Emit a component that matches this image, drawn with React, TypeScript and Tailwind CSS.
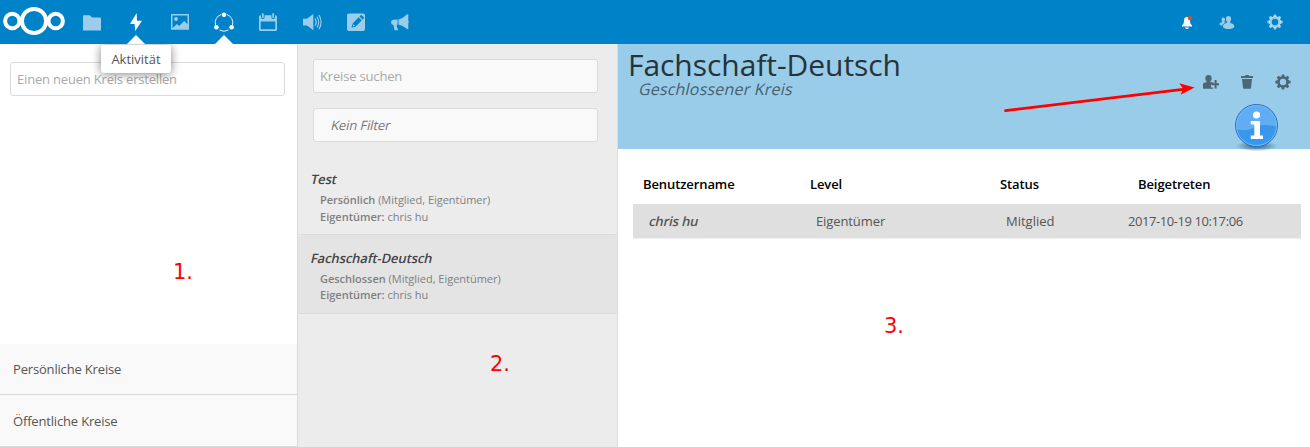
import type { ReactNode } from 'react';

function Icon({ children, className = '', size = 20 }: { children: ReactNode; className?: string; size?: number }) {
  return (
    <svg width={size} height={size} viewBox={`0 0 ${size} ${size}`} className={`block shrink-0 ${className}`} fill="currentColor">
      {children}
    </svg>
  );
}

function Logo() {
  return (
    <svg width="64" height="30" viewBox="0 0 64 30" className="ml-[2px] block shrink-0" fill="none" stroke="#fff" strokeWidth="4">
      <circle cx="32" cy="15" r="12.1" />
      <circle cx="10.3" cy="15" r="7.2" />
      <circle cx="53.7" cy="15" r="7.2" />
    </svg>
  );
}

function Gear({ className = '' }: { className?: string }) {
  const angles = [0, 45, 90, 135, 180, 225, 270, 315];
  return (
    <Icon size={16} className={className}>
      <circle cx="8" cy="8" r="4.5" fill="none" stroke="currentColor" strokeWidth="2.6" />
      {angles.map((a) => (
        <path key={a} d="M6.3 3 6.8.4h2.4L9.7 3z" transform={`rotate(${a} 8 8)`} />
      ))}
    </Icon>
  );
}

/* Slanted upright letters, in place of the family's cursive italic. */
function Oblique({ children, className = '' }: { children: ReactNode; className?: string }) {
  return <span className={`inline-block origin-[0_75%] -skew-x-[13deg] whitespace-nowrap ${className}`}>{children}</span>;
}

const apps: { name: string; active?: boolean; icon: ReactNode }[] = [
  { name: 'folder', icon: <path d="M1.6 3.2h6.2l2.2 2.3h8.4q.6 0 .6.6v11.8q0 .6-.6.6H1.6q-.6 0-.6-.6V3.8q0-.6.6-.6z" /> },
  { name: 'activity', active: true, icon: <path d="M10.700 1 4 12h4.600L9.200 19 16 8.800h-5z" /> },
  {
    name: 'gallery',
    icon: (
      <>
        <path fillRule="evenodd" d="M1.6 2h16.8q.6 0 .6.6v14.6q0 .6-.6.6H1.6q-.6 0-.6-.6V2.6q0-.6.6-.6zm.9 1.5v12.8l4.3-4.2 2.3 2 5-5.2 3.4 3.4V3.5z" />
        <circle cx="6" cy="7" r="1.9" />
      </>
    ),
  },
  {
    name: 'circles',
    active: true,
    icon: (
      <>
        <path d="M12.900 2.500A8.600 8.600 0 0 1 18.500 13M14.500 18a9 9 0 0 1-9 0M1.500 13A8.600 8.600 0 0 1 7.100 2.500" fill="none" stroke="currentColor" strokeWidth=".9" />
        <circle cx="10" cy="2.7" r="2.3" />
        <circle cx="2.4" cy="15.2" r="2.3" />
        <circle cx="17.6" cy="15.2" r="2.3" />
      </>
    ),
  },
  {
    name: 'calendar',
    icon: (
      <>
        <path fillRule="evenodd" d="M2.5 3.2H3v2.1q0 1.8 1.8 1.8t1.8-1.8V3.2h6.8v2.1q0 1.8 1.8 1.8T17 5.300V3.200h.5q1.500 0 1.500 1.500v12.800q0 1.500-1.500 1.500h-15Q1 19 1 17.500V4.700q0-1.500 1.500-1.500zM2.700 9.500v7.800h14.600V9.500z" />
        <rect x="4" y="1" width="1.700" height="5" rx=".8" />
        <rect x="14.300" y="1" width="1.700" height="5" rx=".8" />
      </>
    ),
  },
  {
    name: 'audio',
    icon: (
      <>
        <path d="M1 6.800h4L11.300 2v16.300L5 13.500H1z" />
        <path d="M13 6.500q2.200 3.700 0 7.200M15 4.700q3.300 5.400 0 10.800M17 3q4.200 7.100 0 14.200" fill="none" stroke="currentColor" strokeWidth="1.200" />
      </>
    ),
  },
  {
    name: 'notes',
    icon: (
      <path
        fillRule="evenodd"
        d="M3 1.500h14q2 0 2 2V17q0 2-2 2H3q-2 0-2-2V3.500q0-2 2-2zM12.600 5.300 6.700 11.400 5.500 15.700l4.300-1.300 6-6.100zM13.500 4.400l3.200 3.100 1-1q.7-.7 0-1.400l-1.700-1.700q-.8-.7-1.500 0zM7.400 12.300l1.600 1.500-2.100.6z"
      />
    ),
  },
  {
    name: 'announcements',
    icon: (
      <>
        <path d="M17.200 2.300q.8-.3 1.100.5v6q1.400 1 0 2.200v5.700q-.4.800-1.100.4-4.800-3.700-8.700-4.600V7.600q4.400-1.100 8.700-5.300z" />
        <path d="M7.600 7.600v5l-1 .2.400 1.200-.3 1 1.500 2.400q-.3.900-1 .9H5q-.6 0-.7-.7L3.500 13q-2.500-.2-2.500-2.700 0-2.300 2.500-2.500z" />
      </>
    ),
  },
];

function Pointer() {
  return <div className="absolute bottom-0 left-[13px] h-0 w-0 border-x-[9px] border-b-[9px] border-x-transparent border-b-white" />;
}

function Header() {
  return (
    <header className="relative z-10 flex h-[44px] shrink-0 items-start bg-[#0082c9]">
      <div className="flex h-[42px] w-[70px] items-center"><Logo /></div>
      <nav className="flex">
        {apps.map((app) => (
          <div key={app.name} className={`relative flex h-11 w-11 items-center justify-center ${app.active ? 'text-white' : 'text-white/60'}`}>
            <Icon>{app.icon}</Icon>
            {app.active && <Pointer />}
            {app.name === 'activity' && (
              <div className="absolute left-[-13px] top-[44px] mt-px flex h-7 w-[70px] items-center justify-center rounded-[3px] bg-white pt-[2px] text-[13px] text-[#555] shadow-[0_1px_10px_rgba(50,50,50,0.6)] [clip-path:inset(-1px_-14px_-14px_-14px)]">
                Aktivität
              </div>
            )}
          </div>
        ))}
      </nav>
      <div className="ml-auto flex h-11 items-center pr-[27px]">
        <Icon size={16} className="mr-6 text-white">
          <path d="M8 3q-3 0-3 3.500c0 2.800-.8 4-2 4.700v1.300h10v-1.300c-1.200-.7-2-1.900-2-4.700Q11 3 8 3zM6 13.500h4q-.5 1.500-2 1.500t-2-1.500z" />
          <circle cx="10.900" cy="4.100" r="2.200" fill="#e9481f" />
        </Icon>
        <Icon size={16} className="mr-8 text-white/60">
          <path d="M9.500 2q2.600 0 2.600 2.900 0 1.500-.9 2.600v1.400q4 1.100 4 2.700V13q-1.400 2-5.700 2T4 13v-1.400q0-1.600 3.800-2.700V7.500q-.9-1.100-.9-2.600Q6.900 2 9.500 2z" />
          <path d="M4.300 3.500q1.800 0 1.800 2 0 1-.6 1.700v1q.5.200 1 .5-3.200 1.100-3.400 3.100Q1 11.300.5 10.600V9.700q.1-.8 2.600-1.500v-1q-.6-.7-.6-1.700 0-2 1.800-2z" />
        </Icon>
        <Gear className="text-white/60" />
      </div>
    </header>
  );
}

function CircleRow({ name, kind, selected }: { name: string; kind: string; selected?: boolean }) {
  return (
    <div className={`h-[79px] rounded-[3px] border-b border-[#dadada] pl-[12px] pt-[13px] ${selected ? 'bg-[#e4e4e4]' : ''}`}>
      <div className="text-[13px] font-semibold leading-[20px] text-[#444]"><Oblique className="tracking-[-0.1px]">{name}</Oblique></div>
      <div className="mt-[3px] pl-[10px] text-[11px] leading-[16px] text-[#808080]">
        <div className="tracking-[-0.02px]"><span className="font-semibold">{kind}</span> (Mitglied, Eigentümer)</div>
        <div className={selected ? '' : 'pt-px'}><span className="font-semibold">Eigentümer:</span> chris hu</div>
      </div>
    </div>
  );
}

function Marker({ children, className }: { children: ReactNode; className: string }) {
  return <div className={`absolute font-['DejaVu_Sans',sans-serif] text-[21px] leading-[24px] text-[#ff0000] ${className}`}>{children}</div>;
}

function InfoBadge() {
  return (
    <svg className="absolute left-[614px] top-[57px]" width="50" height="52" viewBox="0 0 50 52">
      <defs>
        <radialGradient id="shade"><stop offset=".3" stopColor="#2f5873" stopOpacity=".65" /><stop offset="1" stopColor="#2f5873" stopOpacity="0" /></radialGradient>
        <linearGradient id="wave" x1="0" y1="0" x2="0" y2="1"><stop stopColor="#3e93e8" /><stop offset="1" stopColor="#329bf5" /></linearGradient>
      </defs>
      <ellipse cx="24.500" cy="45" rx="21" ry="5.500" fill="url(#shade)" />
      <circle cx="24.500" cy="24.500" r="21" fill="#60adf3" stroke="#246eb9" />
      <path d="M4.500 28q9 3 18-1.500t22.200-.7A20.300 20.300 0 0 1 4.500 28z" fill="url(#wave)" />
      <circle cx="24.500" cy="24.500" r="20" fill="none" stroke="#80baf4" strokeWidth=".8" />
      <circle cx="24.500" cy="14" r="3.600" fill="#fff" />
      <path d="M18.800 20h9.200v14.500h3v3.500H18.800v-3.500h3.500v-11h-3.500z" fill="#fff" />
    </svg>
  );
}

export default function App() {
  return (
    <div className="flex h-[447px] w-[1310px] flex-col overflow-hidden bg-white font-['Open_Sans',sans-serif] text-[13px]">
      <Header />
      <div className="flex min-h-0 flex-1">
        <aside className="relative flex w-[298px] shrink-0 flex-col border-r border-[#dadada] bg-white">
          <div className="ml-[10px] mt-[18px] flex h-[34px] w-[275px] items-center rounded-[3px] border border-[#dadada] px-[6px] pt-px tracking-[-0.19px] text-[#aaa]">Einen neuen Kreis erstellen</div>
          <div className="mt-auto bg-[#f9f9f9] tracking-[-0.17px] text-[#555]">
            <div className="flex h-[51px] items-center border-b border-[#dadada] pl-[13px] pt-px">Persönliche Kreise</div>
            <div className="flex h-[52px] items-center border-b border-[#dadada] pl-[13px] pt-[2px]">Öffentliche Kreise</div>
          </div>
          <Marker className="left-[173px] top-[216px]">1.</Marker>
        </aside>

        <section className="relative w-[320px] shrink-0 border-r border-[#dadada] bg-[#ececec]">
          <div className="mx-[15px] mt-[15px] flex h-[34px] w-[285px] items-center rounded-[3px] border border-[#dadada] bg-[#f9f9f9] px-[6px] pt-px tracking-[-0.17px] text-[#aaa]">Kreise suchen</div>
          <div className="mx-[15px] mt-[15px] flex h-[34px] w-[285px] items-center rounded-[3px] border border-[#dadada] bg-[#f9f9f9] px-[16px] pt-px text-[#777]"><Oblique className="tracking-[-0.1px]">Kein Filter</Oblique></div>
          <div className="mt-[14px]">
            <CircleRow name="Test" kind="Persönlich" />
            <CircleRow name="Fachschaft-Deutsch" kind="Geschlossen" selected />
          </div>
          <Marker className="left-[192px] top-[308px]">2.</Marker>
        </section>

        <main className="relative min-w-0 flex-1">
          <div className="relative flex h-[105px] justify-between bg-[#99cce9]">
            <div className="pl-[10px] pt-[3px]">
              <h1 className="text-[30px] leading-[36px] tracking-[-0.05px] text-[#26333a]">Fachschaft-Deutsch</h1>
              <p className="-mt-[5px] pl-[10px] text-[16px] leading-[22px] text-[#47606e]"><Oblique className="tracking-[0.2px]">Geschlossener Kreis</Oblique></p>
            </div>
            <div className="flex h-4 gap-5 pr-[19px] pt-[30px] text-[#4d6675]">
              <Icon size={16}>
                <path d="M5.500 1q3.200 0 3.200 3.400 0 1.800-1.300 3v.8h3v2.600H8v2.700h2v1.300H0V10.200q0-2 3.600-2v-.8q-1.300-1.200-1.300-3Q2.300 1 5.500 1z" />
                <path d="M11.600 6h2v3.200H16v2h-2.400v3.300h-2v-3.300H9v-2h2.600z" />
              </Icon>
              <Icon size={16}><path d="M6.200 1h3.600v1H14v2H2V2h4.200zM3 5h10l-1 9q-.1.800-.8.800H4.800q-.7 0-.8-.8z" /></Icon>
              <Gear />
            </div>
            <svg className="absolute left-[382px] top-[36px]" width="198" height="36" viewBox="0 0 198 36">
              <path d="M5.500 30.700 185 9.200" stroke="#f00" strokeWidth="2.800" strokeLinecap="round" />
              <path d="m194.500 7.500-15.200-4.200 3.800 5.400-2.400 6z" fill="#f00" />
            </svg>
            <InfoBadge />
          </div>
          <div className="mx-[15px] mt-[15px] w-[668px]">
            <div className="flex h-10 items-center pt-[2px] font-semibold tracking-[-0.1px] text-black">
              <div className="w-[167px] pl-[10px]">Benutzername</div>
              <div className="w-[190px] pl-[10px]">Level</div>
              <div className="w-[138px] pl-[10px]">Status</div>
              <div className="pl-[10px]">Beigetreten</div>
            </div>
            <div className="flex h-[35px] items-center border-b border-[#eee] bg-[#dfdfdf] pt-px text-[#555]">
              <div className="w-[167px] pl-[15px] font-semibold"><Oblique className="tracking-[-0.1px]">chris hu</Oblique></div>
              <div className="w-[190px] pl-[16px] tracking-[-0.1px]">Eigentümer</div>
              <div className="w-[138px] pl-[16px]">Mitglied</div>
              <div className="whitespace-nowrap tracking-[-0.42px]">2017-10-19 10:17:06</div>
            </div>
          </div>
          <Marker className="left-[266px] top-[270px]">3.</Marker>
        </main>
      </div>
    </div>
  );
}
